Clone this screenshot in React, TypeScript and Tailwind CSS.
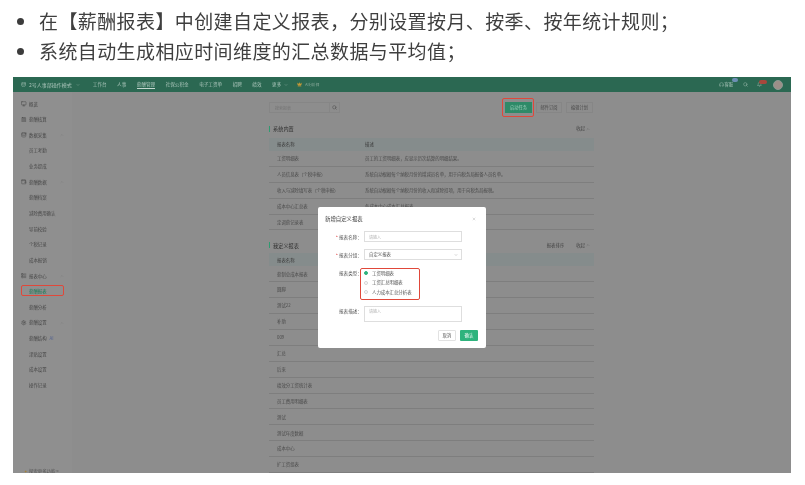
import type { ReactNode } from "react";
import { Bell, Calculator, ChevronDown, ChevronUp, Crown, Database, Headphones, LayoutList, Monitor, Search, Settings, Wallet, X } from "lucide-react";

const navItems = ["工作台", "人事", "薪酬管理", "社保公积金", "电子工资单", "招聘", "绩效"];

const sideItems = [
  { label: "概览", icon: Monitor },
  { label: "薪酬核算", icon: Calculator },
  { label: "数据采集", icon: Database, open: true },
  { label: "员工考勤" },
  { label: "业务提成" },
  { label: "薪酬数据", icon: Wallet, open: true },
  { label: "薪酬档案" },
  { label: "减除费用确认" },
  { label: "导前校验" },
  { label: "个税记录" },
  { label: "成本报销" },
  { label: "报表中心", icon: LayoutList, open: true },
  { label: "薪酬报表", active: true },
  { label: "薪酬分析" },
  { label: "薪酬设置", icon: Settings, open: true },
  { label: "薪酬结构", ai: true },
  { label: "津贴设置" },
  { label: "成本设置" },
  { label: "操作记录" },
];

const builtinRows = [
  ["工资明细表", "员工的工资明细表，应显示历次结算的明细结果。"],
  ["人员信息表（个税申报）", "系统自动根据每个纳税月份的增减员名单，用于向税务局报备人员名单。"],
  ["收入与减除填写表（个税申报）", "系统自动根据每个纳税月份的收入和减除扣项，用于向税务局报税。"],
  ["成本中心汇总表", "各成本中心成本汇总报表"],
  ["定调薪记录表", ""],
];

const customRows = ["薪制总成本报表", "圆脚", "测试22", "补助", "009", "汇总", "后来", "绩效分工资统计表", "员工费用明细表", "测试", "测试年度数据", "成本中心", "扩工资组表"];

function SectionTitle({ title, sort }: { title: string; sort?: boolean }) {
  return (
    <div className="flex h-[8px] items-center">
      <span className="mr-[3px] h-[6px] w-[1px] bg-[#2f9a70]" />
      <span className="flex-1 text-[5.2px] text-[#303030]">{title}</span>
      {sort && <span className="mr-[12px] text-[4.4px] text-[#444]">报表排序</span>}
      <span className="text-[4.4px] text-[#444]">收起</span>
      <ChevronUp className="ml-[1px] mr-[4px] h-[4px] w-[4px] text-[#555]" />
    </div>
  );
}

function Row({ name, desc }: { name: string; desc?: string }) {
  return (
    <div className="flex h-[15.9px] items-center border-b border-[#7e7e7e] pl-[8px] text-[4.4px] text-[#4a4a4a]">
      <span className="w-[88px] shrink-0">{name}</span>
      <span>{desc}</span>
    </div>
  );
}

function Field({ label, required, children }: { label: string; required?: boolean; children: ReactNode }) {
  return (
    <div className="flex">
      <span className="mr-[2px] w-[37px] pt-[2.5px] text-right text-[4.6px] leading-[6px] text-[#555]">
        {required && <span className="text-[#d33]">* </span>}
        {label}：
      </span>
      {children}
    </div>
  );
}

export default function App() {
  return (
    <div className="h-[485px] w-[805px] overflow-hidden bg-white font-['Noto_Sans_CJK_SC','Noto_Sans',sans-serif]">
      <ul className="pl-[17px] pt-[6px] text-[19px] leading-[30px] tracking-[0.4px] text-[#3f3f3f] blur-[0.3px]">
        <li className="flex items-center">
          <span className="mr-[15px] h-[7px] w-[7px] rounded-full bg-[#3c3c3c]" />
          在【薪酬报表】中创建自定义报表，分别设置按月、按季、按年统计规则；
        </li>
        <li className="flex items-center">
          <span className="mr-[15px] h-[7px] w-[7px] rounded-full bg-[#3c3c3c]" />
          系统自动生成相应时间维度的汇总数据与平均值；
        </li>
      </ul>

      <div className="relative ml-[13px] mt-[11px] flex h-[396px] w-[778px] flex-col overflow-hidden bg-[#8d8d8d] blur-[0.45px]">
        <header className="flex h-[15px] shrink-0 items-center bg-[#2b6852] pl-[8px] pr-[8px] text-[4.6px] text-[#a9c4b9]">
          <Database className="mr-[3px] h-[5px] w-[5px]" />
          <span className="mr-[4px] text-[5px]">2号人事部操作模式</span>
          <ChevronDown className="mr-[13px] h-[4px] w-[4px]" />
          <nav className="flex gap-[10.5px]">
            {navItems.map((item) => (
              <span key={item} className={item === "薪酬管理" ? "border-b border-[#c5d8d0] leading-[7px]" : "leading-[7px]"}>
                {item}
              </span>
            ))}
            <span className="flex items-center leading-[7px]">
              更多
              <ChevronDown className="ml-[3px] h-[4px] w-[4px]" />
            </span>
          </nav>
          <Crown className="ml-[9px] mr-[3px] h-[5px] w-[5px] fill-[#c49a3a] text-[#c49a3a]" />
          <span className="text-[3.6px] text-[#8fae9f]">AI分析师</span>
          <div className="ml-auto flex items-center text-[#a9c4b9]">
            <Headphones className="mr-[1px] h-[5px] w-[5px]" />
            <span className="relative mr-[10px] text-[4.2px]">
              客服
              <span className="absolute -right-[5px] -top-[3px] h-[4px] w-[6px] rounded-full bg-[#6d8fb5]" />
            </span>
            <Search className="mr-[9px] h-[5px] w-[5px]" />
            <span className="relative mr-[11px]">
              <Bell className="h-[5px] w-[5px]" />
              <span className="absolute -right-[5px] -top-[2px] h-[4px] w-[8px] rounded-full bg-[#a8473c]" />
            </span>
            <span className="h-[10px] w-[10px] rounded-full border border-[#8a9a92] bg-[#9c8f88]" />
          </div>
        </header>

        <div className="flex min-h-0 flex-1">
          <aside className="flex w-[59px] shrink-0 flex-col bg-[#8f8f8f] pt-[4px]">
            {sideItems.map((item) => {
              const Icon = item.icon;
              return (
                <div key={item.label} className="relative flex h-[15.65px] shrink-0 items-center pl-[8px] text-[4.4px] text-[#474747]">
                  <span className="mr-[3px] w-[5px]">{Icon && <Icon className="h-[5.5px] w-[5.5px] text-[#444]" />}</span>
                  <span className={item.active ? "text-[#177a55]" : ""}>{item.label}</span>
                  {item.ai && <span className="ml-[3px] text-[#56648f]">AI</span>}
                  {item.open && <ChevronUp className="absolute right-[8px] h-[4px] w-[4px] text-[#777]" />}
                  {item.active && <span className="absolute left-[8px] top-[1.5px] h-[11px] w-[43px] rounded-[2px] border-[1.5px] border-[#e0483a]" />}
                </div>
              );
            })}
            <div className="mt-auto flex h-[4px] items-center pl-[11px] text-[4.4px] text-[#555]">
              <span className="mr-[2px] text-[#a4813a]">✦</span>
              探索更多功能 &gt;
            </div>
          </aside>

          <main className="flex-1 pl-[197px] pt-[10px]">
            <div className="w-[325px]">
              <div className="flex h-[11px] items-center">
                <div className="flex h-full w-[71px] items-center border border-[#868686]">
                  <span className="flex-1 pl-[5px] text-[4px] text-[#757575]">搜索报表</span>
                  <span className="flex h-full w-[10px] items-center justify-center border-l border-[#868686]">
                    <Search className="h-[5px] w-[5px] text-[#444]" />
                  </span>
                </div>
                <div className="relative ml-auto mr-[1px] flex h-full gap-[4px] text-[4.2px]">
                  <span className="flex w-[27px] items-center justify-center bg-[#2e8a68] text-[#9fd0bd]">启动任务</span>
                  <span className="flex w-[26px] items-center justify-center border border-[#868686] text-[#4a4a4a]">邮件订阅</span>
                  <span className="flex w-[27px] items-center justify-center border border-[#868686] text-[#4a4a4a]">编辑计划</span>
                  <span className="absolute -left-[3px] -top-[4px] h-[19px] w-[32px] rounded-[2px] border-[1.5px] border-[#e0483a]" />
                </div>
              </div>

              <div className="mb-[5.5px] mt-[11.5px]">
                <SectionTitle title="系统内置" />
              </div>
              <div className="flex h-[13px] items-center bg-[#858c8c] pl-[8px] text-[4.4px] text-[#3c3c3c]">
                <span className="w-[88px]">报表名称</span>
                <span>描述</span>
              </div>
              {builtinRows.map(([name, desc]) => (
                <Row key={name} name={name} desc={desc} />
              ))}

              <div className="mb-[4px] mt-[11px]">
                <SectionTitle title="我定义报表" sort />
              </div>
              <div className="flex h-[13px] items-center bg-[#858c8c] pl-[8px] text-[4.4px] text-[#3c3c3c]">
                报表名称
              </div>
              {customRows.map((name) => (
                <Row key={name} name={name} />
              ))}
            </div>
          </main>
        </div>

        <div className="absolute left-[305px] top-[130px] flex h-[141px] w-[168px] flex-col rounded-[2px] bg-white px-[7px] pt-[8px]">
          <div className="flex h-[8px] items-center justify-between pr-[3px]">
            <span className="text-[5.4px] text-[#333]">新增自定义报表</span>
            <X className="h-[4px] w-[4px] text-[#999]" />
          </div>
          <div className="mt-[8px] flex flex-col gap-[7px]">
            <Field label="报表名称" required>
              <div className="flex h-[11px] w-[98px] items-center border border-[#dedede] pl-[4px] text-[4px] text-[#b5b5b5]">请输入</div>
            </Field>
            <Field label="报表分组" required>
              <div className="flex h-[11px] w-[98px] items-center justify-between border border-[#dedede] pl-[4px] pr-[3px] text-[4.4px] text-[#555]">
                自定义报表
                <ChevronDown className="h-[4px] w-[4px] text-[#888]" />
              </div>
            </Field>
            <Field label="报表类型">
              <div className="relative flex h-[31.5px] flex-col gap-[1.5px] pt-[2px] text-[4.4px] text-[#555]">
                {["工资明细表", "工资汇总明细表", "人力成本汇总分析表"].map((t, i) => (
                  <div key={t} className="flex h-[8px] items-center">
                    <span className={i === 0 ? "mr-[4px] h-[4px] w-[4px] rounded-full border border-[#2eb37d] bg-[#2eb37d]" : "mr-[4px] h-[4px] w-[4px] rounded-full border border-[#d4d4d4]"} />
                    {t}
                  </div>
                ))}
                <span className="absolute -left-[4px] top-[1px] h-[32px] w-[60px] rounded-[2px] border-[1.5px] border-[#e0483a]" />
              </div>
            </Field>
            <Field label="报表描述">
              <div className="h-[16px] w-[98px] border border-[#dedede] pl-[4px] pt-[1px] text-[4px] text-[#b5b5b5]">请输入</div>
            </Field>
          </div>
          <div className="mt-[8px] flex justify-end gap-[4px] pr-[1px]">
            <span className="flex h-[11px] w-[18px] items-center justify-center rounded-[1px] border border-[#e2e2e2] text-[4.4px] text-[#555]">取消</span>
            <span className="flex h-[11px] w-[18px] items-center justify-center rounded-[1px] bg-[#2eb37d] text-[4.4px] text-white">确认</span>
          </div>
        </div>
      </div>
    </div>
  );
}
